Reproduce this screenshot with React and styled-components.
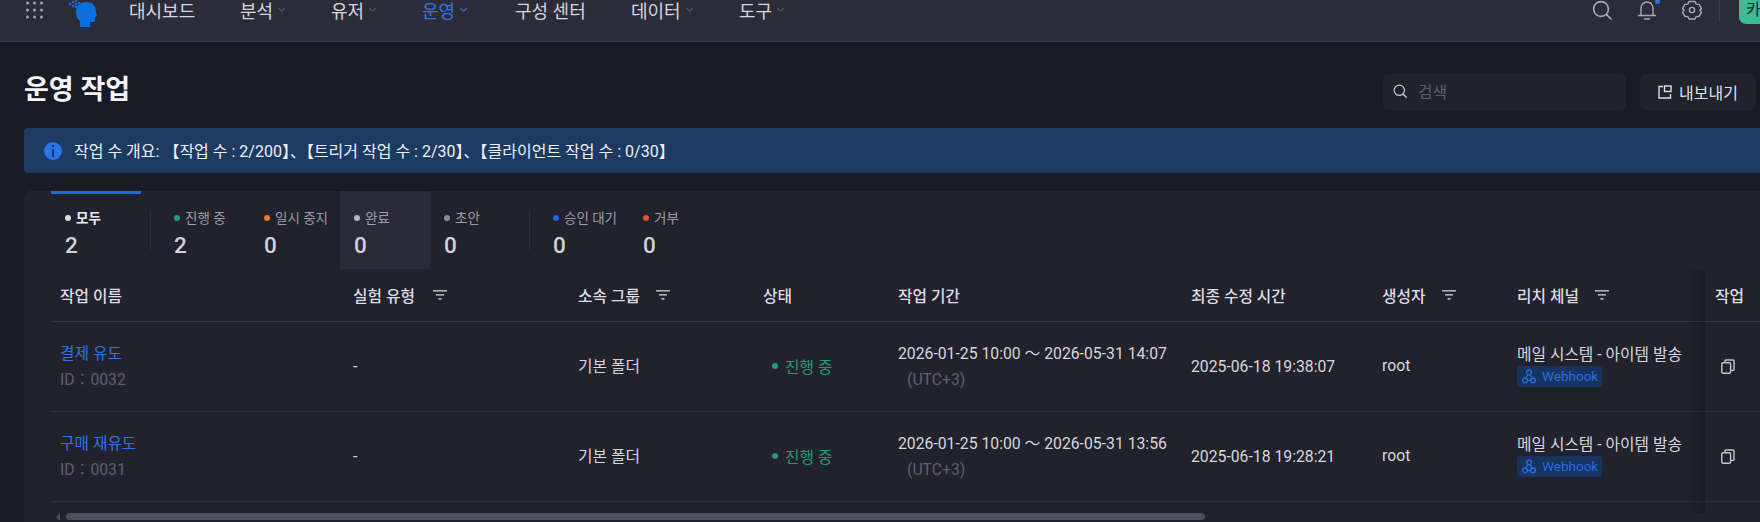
import React from "react";
import styled, { createGlobalStyle } from "styled-components";

const Global = createGlobalStyle`
  html, body { margin: 0; padding: 0; background: #1a1a24; overflow: hidden; height: 522px; }
  body { font-family: Roboto, "Noto Sans CJK KR", "Noto Sans", sans-serif; color: #e4e5ec; }
  * { box-sizing: border-box; }
`;

const Page = styled.div`
  width: 1760px;
  height: 522px;
  overflow: hidden;
  position: relative;
`;

const Nav = styled.header`
  height: 64px;
  margin-top: -22px;
  background: #2c2c39;
  border-bottom: 1px solid #3a3a47;
  display: flex;
  align-items: center;
  width: 1800px;
`;

const AppGrid = styled.svg`
  margin-left: 26px;
  width: 18px;
  height: 18px;
  flex: none;
`;

const LogoMark = styled.svg`
  margin-left: 25px;
  width: 28px;
  height: 30px;
  flex: none;
  position: relative;
  top: 2px;
`;

const Menu = styled.nav`
  display: flex;
  align-items: center;
  margin-left: 32px;
  flex: none;
`;

const MenuItem = styled.a`
  display: flex;
  align-items: center;
  gap: 4px;
  width: ${(p) => p.$w}px;
  font-size: 18px;
  color: ${(p) => (p.$active ? "#2e74e6" : "#d4d5de")};
`;

const Chevron = styled.svg`
  width: 9px;
  height: 9px;
  color: ${(p) => (p.$active ? "#2e74e6" : "#5d5e6b")};
`;

const NavRight = styled.div`
  display: flex;
  align-items: center;
  margin-left: 773px;
  flex: none;
`;

const NavIcon = styled.span`
  position: relative;
  display: flex;
  width: 20px;
  height: 20px;
  margin-right: ${(p) => p.$gap}px;
  color: #a9aab4;
`;

const BlueDot = styled.i`
  position: absolute;
  right: -3px;
  top: -1px;
  width: 5px;
  height: 5px;
  border-radius: 50%;
  background: #2e74e6;
`;

const NavDivider = styled.span`
  width: 1px;
  height: 24px;
  background: #3d3d4a;
  margin-right: 19px;
`;

const Avatar = styled.div`
  width: 40px;
  height: 44px;
  margin-top: -15px;
  border-radius: 7px;
  background: #3dbb94;
  color: #17212a;
  font-size: 16px;
  padding: 20px 0 0 7px;
  line-height: 20px;
`;

const Main = styled.main`
  padding: 0 0 0 24px;
  width: 1800px;
`;

const TitleRow = styled.div`
  display: flex;
  align-items: flex-start;
  height: 86px;
  padding: 32px 44px 0 0;
`;

const Title = styled.h1`
  margin: -2px 0 0 0;
  flex: 1;
  font-size: 27px;
  font-weight: 700;
  color: #f4f5f8;
  line-height: 36px;
`;

const SearchBox = styled.div`
  width: 243px;
  height: 36px;
  border-radius: 5px;
  background: #22222d;
  display: flex;
  align-items: center;
  gap: 11px;
  padding: 0 0 2px 10px;
  color: #5f606c;
  font-size: 15.75px;
`;

const SearchBoxIcon = styled.span`
  display: flex;
  color: #c8c9d2;
`;

const ExportButton = styled.button`
  margin-left: 14px;
  width: 116px;
  height: 36px;
  border: 0;
  border-radius: 5px;
  background: #22222d;
  color: #dfe0e7;
  font: inherit;
  font-size: 16px;
  display: flex;
  align-items: center;
  justify-content: center;
  gap: 7px;
`;

const Alert = styled.div`
  height: 45px;
  border-radius: 4px;
  background: #1d3a63;
  display: flex;
  align-items: center;
  gap: 12px;
  padding: 0 0 2px 20px;
  font-size: 16px;
  color: #eef0f5;
`;

const InfoDot = styled.span`
  width: 18px;
  height: 18px;
  border-radius: 50%;
  background: #2a74ea;
  display: flex;
  align-items: center;
  justify-content: center;
  flex: none;
  margin-top: 2px;
`;

const Card = styled.section`
  margin-top: 18px;
  height: 340px;
  background: #22222d;
  border-radius: 6px 0 0 0;
  padding: 0 0 0 27px;
  position: relative;
`;

const Tabs = styled.div`
  height: 78px;
  display: flex;
`;

const Tab = styled.div`
  width: 90px;
  height: 78px;
  padding: 16px 0 0 14px;
  background: ${(p) => (p.$hover ? "#2b2b37" : "transparent")};
  border-top: 3px solid ${(p) => (p.$active ? "#1f6ae0" : "transparent")};
`;

const TabLabel = styled.div`
  display: flex;
  align-items: center;
  gap: 5px;
  font-size: 13.5px;
  line-height: 16px;
  white-space: nowrap;
  font-weight: ${(p) => (p.$active ? 700 : 400)};
  color: ${(p) => (p.$active ? "#eceef3" : "#9b9ca8")};
`;

const Dot = styled.i`
  width: 6px;
  height: 6px;
  border-radius: 50%;
  background: ${(p) => p.$c};
  flex: none;
`;

const TabCount = styled.div`
  font-size: 22.5px;
  font-weight: 500;
  line-height: 28px;
  margin-top: 5px;
  color: #d0d1dc;
`;

const TabDivider = styled.span`
  width: 1px;
  height: 40px;
  margin: 19px 9px 0 9px;
  background: #2f2f3b;
  flex: none;
`;

const Columns = "293px 225px 185px 135px 293px 191px 135px 198px 94px";

const HeaderRow = styled.div`
  display: grid;
  grid-template-columns: ${Columns};
  height: 53px;
  align-items: center;
  border-bottom: 1px solid #383844;
`;

const HeaderCell = styled.div`
  padding-left: 9px;
  font-size: 15.75px;
  font-weight: 500;
  color: #dcdde6;
  display: flex;
  align-items: center;
  gap: ${(p) => p.$gap || 0}px;
`;

const FilterIcon = styled.svg`
  width: 14px;
  height: 10px;
  color: #b0b1bc;
`;

const BodyRow = styled.div`
  display: grid;
  grid-template-columns: ${Columns};
  height: 90px;
  align-items: center;
  border-bottom: 1px solid #30303c;
`;

const Cell = styled.div`
  padding-left: 9px;
  font-size: 15.75px;
  color: #d5d6df;
  white-space: nowrap;
`;

const NameLink = styled.div`
  color: #2e74e6;
  line-height: 20px;
`;

const SubText = styled.div`
  color: #5f606d;
  line-height: 20px;
  margin-top: 6px;
  padding-left: ${(p) => p.$indent || 0}px;
`;

const DateText = styled.div`
  line-height: 20px;
`;

const StatusText = styled.div`
  display: flex;
  align-items: center;
  gap: 7px;
  padding-left: 9px;
  color: #1e9c78;
  margin-top: -1px;
`;

const RootText = styled.div`
  margin-top: -3px;
`;

const FolderText = styled.div`
  margin-top: -3px;
`;

const ChannelText = styled.div`
  line-height: 20px;
  margin-top: -1px;
`;

const WebhookTag = styled.span`
  display: inline-flex;
  align-items: center;
  gap: 6px;
  height: 21px;
  width: 85px;
  padding-left: 5px;
  border-radius: 3px;
  background: #17335f;
  color: #2a6de0;
  font-size: 13.5px;
  margin-top: 1px;
`;

const CopyCell = styled.div`
  padding-left: 15px;
  color: #c4c5cf;
  display: flex;
`;

const StickyShade = styled.div`
  position: absolute;
  top: 78px;
  left: 1661px;
  width: 20px;
  height: 244px;
  background: linear-gradient(to right, rgba(18, 18, 26, 0), rgba(18, 18, 26, 0.42));
  pointer-events: none;
`;

const ScrollBar = styled.div`
  position: absolute;
  left: 27px;
  top: 322px;
  height: 7px;
  display: flex;
  align-items: center;
  gap: 6px;
`;

const ScrollArrow = styled.i`
  width: 0;
  height: 0;
  margin-left: 5px;
  border-top: 4px solid transparent;
  border-bottom: 4px solid transparent;
  border-right: 4px solid #4e4e5a;
`;

const ScrollThumb = styled.div`
  width: 1139px;
  height: 7px;
  border-radius: 4px;
  background: #4e4e5a;
`;

const SearchGlyph = ({ size = 20, w = 1.6 }) => (
  <svg width={size} height={size} viewBox="0 0 20 20" fill="none" stroke="currentColor" strokeWidth={w} strokeLinecap="round">
    <circle cx="9" cy="9" r="7.4" />
    <path d="M14.6 14.6 19 19" />
  </svg>
);

const ChevronDown = ({ active }) => (
  <Chevron $active={active} viewBox="0 0 10 10" fill="none" stroke="currentColor" strokeWidth="1.2">
    <path d="M1.5 3.5 5 7l3.5-3.5" />
  </Chevron>
);

const Filter = () => (
  <FilterIcon viewBox="0 0 14 10" fill="currentColor">
    <rect x="0" y="0" width="14" height="1.6" />
    <rect x="3" y="4" width="8" height="1.6" />
    <rect x="5.5" y="8" width="3" height="1.8" />
  </FilterIcon>
);

const WebhookIcon = () => (
  <svg width="14" height="15" viewBox="0 0 14 15" fill="none" stroke="currentColor" strokeWidth="1.3">
    <circle cx="7" cy="3.4" r="2.4" />
    <circle cx="3" cy="11.4" r="2.4" />
    <circle cx="11" cy="11.4" r="2.4" />
    <path d="M5.9 5.6 3.8 9M8.1 5.6 10.2 9M5.4 11.4h3.2" />
  </svg>
);

const CopyIcon = () => (
  <svg width="14" height="15" viewBox="0 0 14 15" fill="none" stroke="currentColor" strokeWidth="1.4">
    <rect x="0.8" y="3.8" width="8.8" height="10.4" rx="1.2" />
    <path d="M4 3.4V2a1 1 0 0 1 1-1h7a1 1 0 0 1 1 1v8.4a1 1 0 0 1-1 1h-2" />
  </svg>
);

const tabs1 = [
  { label: "진행 중", c: "#1e9c78", n: 2 },
  { label: "일시 중지", c: "#e8801c", n: 0 },
  { label: "완료", c: "#b3b4bf", n: 0, hover: true },
  { label: "초안", c: "#8b8c97", n: 0 },
];
const tabs2 = [
  { label: "승인 대기", c: "#2068e0", n: 0 },
  { label: "거부", c: "#e0503a", n: 0 },
];

const rows = [
  { name: "결제 유도", id: "0032", end: "14:07", mod: "2025-06-18 19:38:07" },
  { name: "구매 재유도", id: "0031", end: "13:56", mod: "2025-06-18 19:28:21" },
];

const menu = [
  { t: "대시보드", w: 111 },
  { t: "분석", w: 91, c: 1 },
  { t: "유저", w: 91, c: 1 },
  { t: "운영", w: 93, c: 1, a: 1 },
  { t: "구성 센터", w: 116 },
  { t: "데이터", w: 108, c: 1 },
  { t: "도구", w: 80, c: 1 },
];

const logoDots = [
  [0, 3], [3, 1], [6, 3], [3, 5], [6, 0], [9, 2], [6, 6], [9, 5], [12, 3],
];

const TabItem = ({ label, c, n, hover, active }) => (
  <Tab $hover={hover} $active={active}>
    <TabLabel $active={active}>
      <Dot $c={c} />
      {label}
    </TabLabel>
    <TabCount>{n}</TabCount>
  </Tab>
);

export default function App() {
  return (
    <Page>
      <Global />
      <Nav>
        <AppGrid viewBox="0 0 18 18" fill="#a3a4ae">
          {[3, 10, 17].flatMap((y) =>
            [1.5, 8.5, 15.5].map((x) => <circle key={`${x}-${y}`} cx={x} cy={y - 1} r="1.5" />)
          )}
        </AppGrid>
        <LogoMark viewBox="0 0 28 30">
          <path
            fill="#0b6fdd"
            d="M11 30v-6c-3-2-4-5-4-9 0-6 5-10 11-10 6 0 9 5 9 10l1 4-2 1v3c0 2-1 2-3 2h-2v5z"
          />
          <g fill="#0b6fdd">
            {logoDots.map(([x, y]) => (
              <rect key={`${x}-${y}`} x={x} y={y + 3} width="2.2" height="2.2" />
            ))}
          </g>
        </LogoMark>
        <Menu>
          {menu.map((m) => (
            <MenuItem key={m.t} $w={m.w} $active={m.a}>
              {m.t}
              {m.c && <ChevronDown active={m.a} />}
            </MenuItem>
          ))}
        </Menu>
        <NavRight>
          <NavIcon $gap={25}>
            <SearchGlyph />
          </NavIcon>
          <NavIcon $gap={25}>
            <svg width="20" height="20" viewBox="0 0 20 20" fill="none" stroke="currentColor" strokeWidth="1.4" strokeLinecap="round">
              <path d="M1.5 15.5h17M4 15.5V8a6 6 0 0 1 12 0v7.5M7.5 19h5" />
            </svg>
            <BlueDot />
          </NavIcon>
          <NavIcon $gap={17}>
            <svg width="20" height="20" viewBox="0 0 20 20" fill="none" stroke="currentColor" strokeWidth="1.4" strokeLinejoin="round">
              <path d="M7 1.5h6l1.2 2.6 2.9.3 2.4 4.2-1.7 1.4 1.7 2.4-2.4 3.9-2.9.3L13 19H7l-1.2-2.4-2.9-.3-2.4-3.9L2.2 10 .5 8.6l2.4-4.2 2.9-.3z" />
              <circle cx="10" cy="10" r="2.6" />
            </svg>
          </NavIcon>
          <NavDivider />
          <Avatar>카</Avatar>
        </NavRight>
      </Nav>
      <Main>
        <TitleRow>
          <Title>운영 작업</Title>
          <SearchBox>
            <SearchBoxIcon>
              <SearchGlyph size={14} w={1.8} />
            </SearchBoxIcon>
            검색
          </SearchBox>
          <ExportButton>
            <svg width="14" height="14" viewBox="0 0 14 14" fill="none" stroke="currentColor" strokeWidth="1.4">
              <path d="M5 1.5H1v11.5h11.5V9" />
              <rect x="6.5" y="1" width="6.5" height="5.5" />
            </svg>
            내보내기
          </ExportButton>
        </TitleRow>
        <Alert>
          <InfoDot>
            <svg width="4" height="12" viewBox="0 0 4 12" fill="#123a72">
              <rect x="1" y="0" width="2" height="2" />
              <rect x="1" y="4" width="2" height="8" />
            </svg>
          </InfoDot>
          작업 수 개요: 【작업 수 : 2/200】、【트리거 작업 수 : 2/30】、【클라이언트 작업 수 : 0/30】
        </Alert>
        <Card>
          <Tabs>
            <TabItem label="모두" c="#d9dae3" n={2} active />
            <TabDivider />
            {tabs1.map((t) => (
              <TabItem key={t.label} {...t} />
            ))}
            <TabDivider />
            {tabs2.map((t) => (
              <TabItem key={t.label} {...t} />
            ))}
          </Tabs>
          <HeaderRow>
            <HeaderCell>작업 이름</HeaderCell>
            <HeaderCell $gap={18}>실험 유형<Filter /></HeaderCell>
            <HeaderCell $gap={16}>소속 그룹<Filter /></HeaderCell>
            <HeaderCell>상태</HeaderCell>
            <HeaderCell>작업 기간</HeaderCell>
            <HeaderCell>최종 수정 시간</HeaderCell>
            <HeaderCell $gap={17}>생성자<Filter /></HeaderCell>
            <HeaderCell $gap={16}>리치 체널<Filter /></HeaderCell>
            <HeaderCell>작업</HeaderCell>
          </HeaderRow>
          {rows.map((r) => (
            <BodyRow key={r.id}>
              <Cell>
                <NameLink>{r.name}</NameLink>
                <SubText>ID：{r.id}</SubText>
              </Cell>
              <Cell>-</Cell>
              <Cell>
                <FolderText>기본 폴더</FolderText>
              </Cell>
              <Cell>
                <StatusText>
                  <Dot $c="#1e9c78" />
                  진행 중
                </StatusText>
              </Cell>
              <Cell>
                <DateText>2026-01-25 10:00 ～ 2026-05-31 {r.end}</DateText>
                <SubText $indent={9}>(UTC+3)</SubText>
              </Cell>
              <Cell>{r.mod}</Cell>
              <Cell>
                <RootText>root</RootText>
              </Cell>
              <Cell>
                <ChannelText>메일 시스템 - 아이템 발송</ChannelText>
                <WebhookTag>
                  <WebhookIcon />
                  Webhook
                </WebhookTag>
              </Cell>
              <CopyCell>
                <CopyIcon />
              </CopyCell>
            </BodyRow>
          ))}
          <StickyShade />
          <ScrollBar>
            <ScrollArrow />
            <ScrollThumb />
          </ScrollBar>
        </Card>
      </Main>
    </Page>
  );
}
